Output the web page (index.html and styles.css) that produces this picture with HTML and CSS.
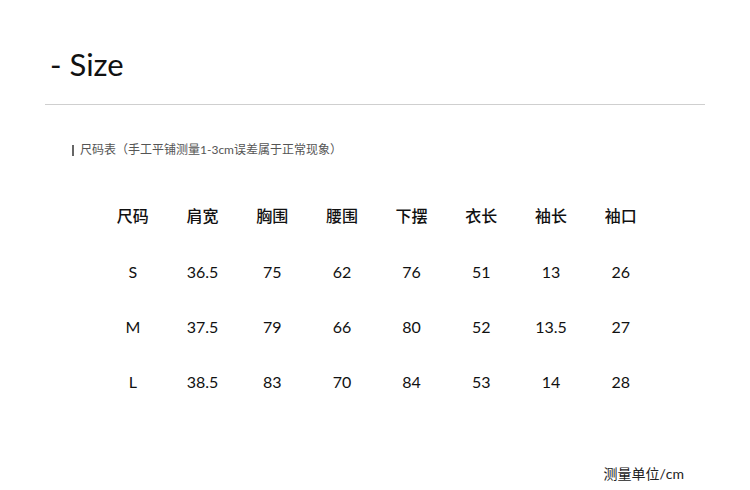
FILE: index.html
```html
<!DOCTYPE html>
<html lang="zh">
<head>
<meta charset="utf-8">
<link rel="stylesheet" href="styles.css">
</head>
<body>
<div class="page">
  <h1 class="title">- Size</h1>
  <div class="rule"></div>
  <p class="note"><span class="bar"></span>尺码表（手工平铺测量1-3cm误差属于正常现象）</p>
  <div class="table">
    <div class="row head">
      <span>尺码</span><span>肩宽</span><span>胸围</span><span>腰围</span><span>下摆</span><span>衣长</span><span>袖长</span><span>袖口</span>
    </div>
    <div class="row">
      <span>S</span><span>36.5</span><span>75</span><span>62</span><span>76</span><span>51</span><span>13</span><span>26</span>
    </div>
    <div class="row">
      <span>M</span><span>37.5</span><span>79</span><span>66</span><span>80</span><span>52</span><span>13.5</span><span>27</span>
    </div>
    <div class="row">
      <span>L</span><span>38.5</span><span>83</span><span>70</span><span>84</span><span>53</span><span>14</span><span>28</span>
    </div>
  </div>
  <p class="unit">测量单位/cm</p>
</div>
</body>
</html>
```

FILE: styles.css
```css
* { box-sizing: border-box; }
html, body { margin: 0; padding: 0; background: #fff; }
body {
  width: 750px;
  height: 490px;
  font-family: "Lato", "Noto Sans CJK SC", sans-serif;
  color: #111;
}
.page {
  padding: 44px 45px 0 45px;
  position: relative;
  height: 490px;
}
.title {
  margin: 0 0 0 5px;
  font-family: "Lato", sans-serif;
  font-weight: 400;
  font-size: 31px;
  line-height: 40px;
  color: #111;
}
.rule {
  margin-top: 20px;
  height: 1px;
  background: #cfcfcf;
}
.note {
  margin: 36px 0 0 27px;
  font-size: 12px;
  line-height: 18px;
  color: #555;
  display: flex;
  align-items: center;
  font-family: "Lato", "Noto Sans CJK SC", sans-serif;
}
.bar {
  display: inline-block;
  width: 2px;
  height: 11px;
  background: #666;
  margin-right: 6px;
}
.table {
  margin: 26px 0 0 53px;
  display: flex;
  flex-direction: column;
}
.row {
  display: grid;
  grid-template-columns: repeat(8, 69.7px);
  height: 55px;
  align-items: center;
  font-size: 16px;
  color: #111;
}
.row span { text-align: center; }
.row.head {
  height: 59px;
  font-family: "Noto Sans CJK SC", sans-serif;
  font-weight: 500;
  font-size: 16px;
}
.unit {
  position: absolute;
  right: 66px;
  top: 465px;
  margin: 0;
  font-size: 14px;
  line-height: 18px;
  color: #222;
}
```
